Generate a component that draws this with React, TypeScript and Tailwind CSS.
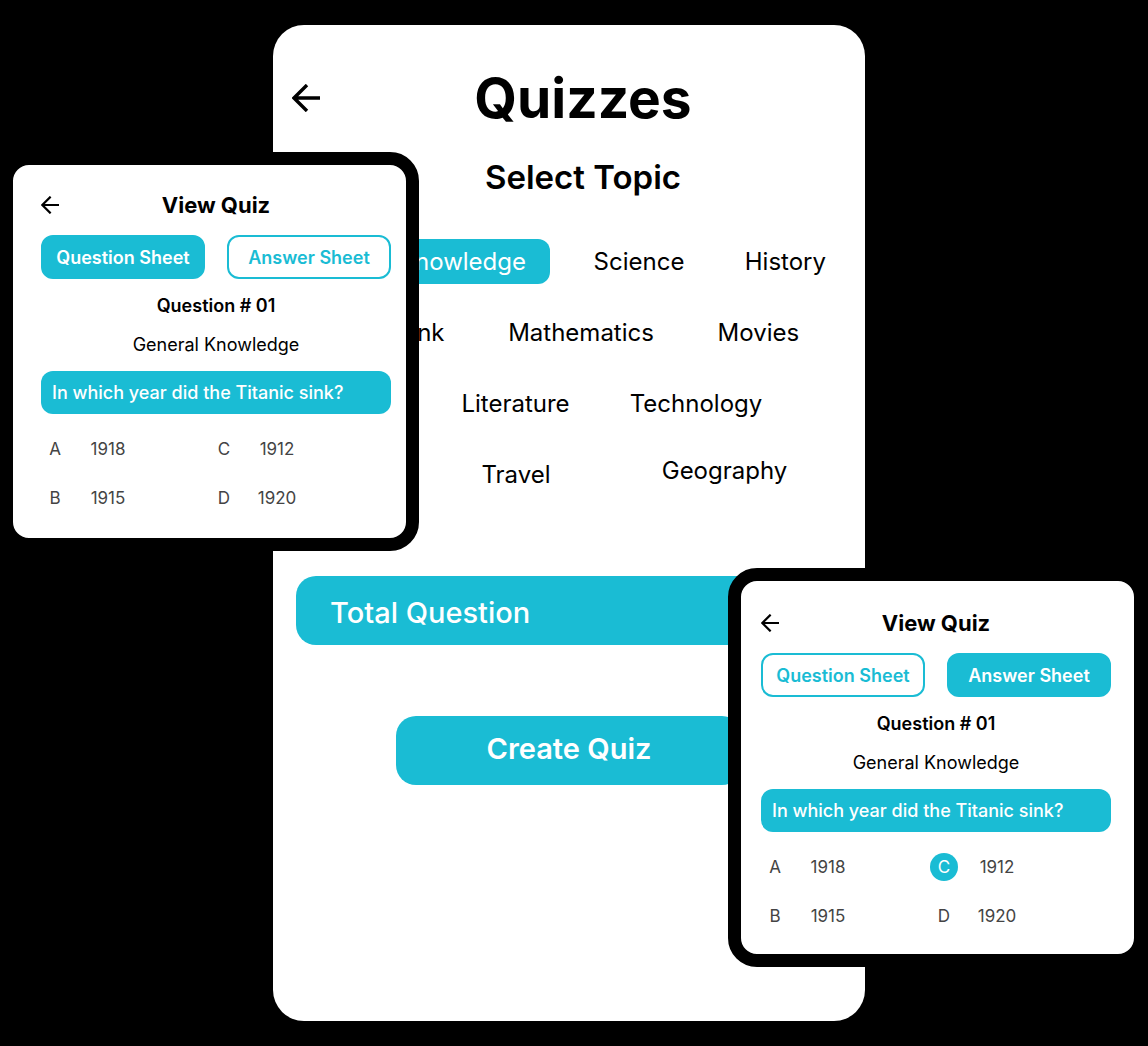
import { clsx } from "clsx";

function BackArrow({ className }: { className: string }) {
  return (
    <svg viewBox="0 0 28 28" fill="none" stroke="currentColor" strokeWidth="3.4" className={className} aria-hidden="true">
      <path d="M28 14H2M15 1L2 14l13 13" />
    </svg>
  );
}

function Topic({ label, className }: { label: string; className?: string }) {
  return (
    <button type="button" className={clsx("h-[45px] whitespace-nowrap text-[24px] leading-8", className)}>
      {label}
    </button>
  );
}

function Tab({ label, active }: { label: string; active: boolean }) {
  return (
    <button
      type="button"
      aria-pressed={active}
      className={clsx(
        "h-11 rounded-xl border-2 border-[#1abcd4] whitespace-nowrap text-[18px] font-semibold",
        active ? "bg-[#1abcd4] text-white" : "bg-white text-[#1abcd4]",
      )}
    >
      {label}
    </button>
  );
}

const options = [
  ["A", "1918"],
  ["C", "1912"],
  ["B", "1915"],
  ["D", "1920"],
];

function QuizCard({ answers, className }: { answers: boolean; className: string }) {
  return (
    <section className={clsx("absolute w-[419px] rounded-[29px] border-[13px] border-black bg-white", className)}>
      <header className="relative flex h-6 items-center justify-center">
        <button type="button" aria-label="Back" className="absolute left-0">
          <BackArrow className="size-[18px]" />
        </button>
        <h2 className="text-[22px] leading-6 font-bold">View Quiz</h2>
      </header>
      <div className="mt-[18px] grid grid-cols-2 gap-[22px]">
        <Tab label="Question Sheet" active={!answers} />
        <Tab label="Answer Sheet" active={answers} />
      </div>
      <h3 className="mt-[15px] text-center text-[18px] leading-6 font-semibold">Question # 01</h3>
      <p className="mt-[15px] text-center text-[18px] leading-6">General Knowledge</p>
      <p className="mt-[14px] rounded-xl bg-[#1abcd4] px-[11px] text-[18px] leading-[43px] font-medium whitespace-nowrap text-white">
        In which year did the Titanic sink?
      </p>
      <div className="mt-[21px] grid grid-cols-[169fr_181fr] gap-y-[21px] text-[17px] leading-7 text-[#444]">
        {options.map(([letter, year]) => (
          <button type="button" key={letter} className="flex w-[106px]">
            <span className={clsx("size-7 rounded-full", answers && letter === "C" && "bg-[#1abcd4] text-white")}>{letter}</span>
            <span className="flex-1">{year}</span>
          </button>
        ))}
      </div>
    </section>
  );
}

export default function App() {
  return (
    <div className="min-h-screen bg-black font-['Inter',sans-serif] text-black">
      <div className="relative mx-auto max-w-[1148px] py-[25px] pr-[283px] pl-[273px]">
        <main className="rounded-[31px] bg-white px-[23px] pt-[45px] pb-[236px]">
          <header className="-mx-1 grid grid-cols-[28px_1fr] items-center gap-y-[31px] text-center">
            <button type="button" aria-label="Back">
              <BackArrow className="size-7" />
            </button>
            <h1 className="text-[55px] leading-[56px] font-bold">Quizzes</h1>
            <h2 className="col-start-2 text-[33px] leading-10 font-semibold">Select Topic</h2>
          </header>

          <div className="mt-[42px] grid gap-[26px]">
            <div className="grid grid-cols-[254fr_178fr_114fr]">
              <Topic label="General Knowledge" className="rounded-xl bg-[#1abcd4] pr-6 text-right text-white" />
              <Topic label="Science" />
              <Topic label="History" className="pr-4 text-right" />
            </div>
            <div className="grid grid-cols-[149fr_274fr_80fr_43fr]">
              <Topic label="Food & Drink" className="text-right" />
              <Topic label="Mathematics" />
              <Topic label="Movies" />
            </div>
            <div className="grid grid-cols-[151fr_137fr_224fr_34fr]">
              <Topic label="Literature" className="col-start-2" />
              <Topic label="Technology" />
            </div>
            <div className="grid grid-cols-[114fr_212fr_205fr_15fr]">
              <Topic label="Travel" className="col-start-2" />
              <Topic label="Geography" className="pb-2" />
            </div>
          </div>

          <button type="button" className="mt-[79px] block h-[69px] w-full rounded-[20px] bg-[#1abcd4] px-[34px] pt-1 text-left text-[29px] font-medium text-white">
            Total Question
          </button>
          <button type="button" className="mx-auto mt-[71px] block h-[69px] w-[346px] rounded-[20px] bg-[#1abcd4] pb-1 text-[29px] font-semibold text-white">
            Create Quiz
          </button>
        </main>

        <QuizCard answers={false} className="top-[152px] left-0 pt-7 pr-[15px] pb-[26px] pl-7" />
        <QuizCard answers className="top-[568px] right-px pt-[30px] pr-[23px] pb-6 pl-5" />
      </div>
    </div>
  );
}
